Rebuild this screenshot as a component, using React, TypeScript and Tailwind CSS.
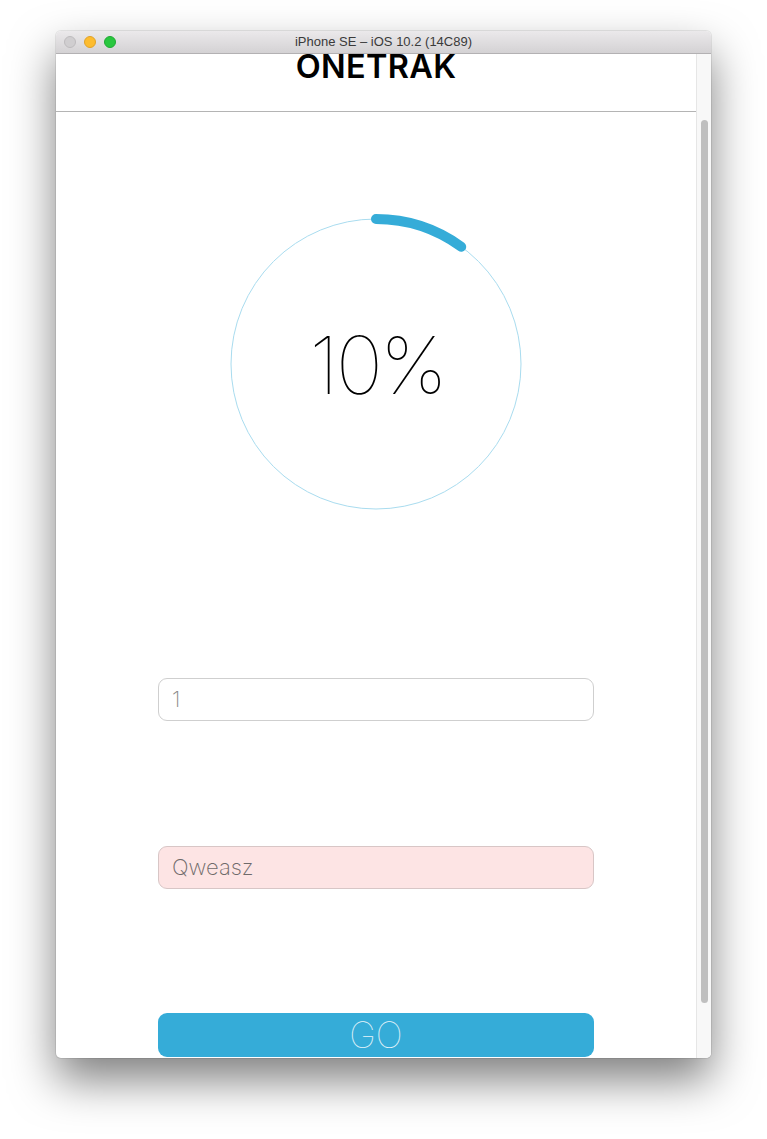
import React from "react";

function Ring() {
  const r = 145;
  const c = 150;
  const ang = (36 * Math.PI) / 180;
  const ex = c + r * Math.sin(ang);
  const ey = c - r * Math.cos(ang);
  return (
    <div className="relative w-[300px] h-[300px]">
      <svg width="300" height="300" viewBox="0 0 300 300" className="absolute inset-0">
        <circle cx={c} cy={c} r={r} fill="none" stroke="#a9dcef" strokeWidth="1" />
        <path
          d={`M ${c} ${c - r} A ${r} ${r} 0 0 1 ${ex} ${ey}`}
          fill="none"
          stroke="#35acd8"
          strokeWidth="10"
          strokeLinecap="round"
        />
      </svg>
      <div className="absolute inset-0 flex items-center justify-center">
        <span className="text-[80px] leading-none font-thin text-black tracking-[-3px] font-['Inter',sans-serif] pl-[2px] pt-[2px]">
          10%
        </span>
      </div>
    </div>
  );
}

export default function App() {
  return (
    <div className="w-[767px] h-[1139px] bg-white pt-[31px] pl-[56px] font-['Inter',sans-serif]">
      <div className="w-[655px] h-[1027px] rounded-[5px] overflow-hidden flex flex-col shadow-[0_22px_45px_rgba(0,0,0,0.5),0_0_0_1px_rgba(0,0,0,0.08)] bg-white">
        <div className="h-[23px] shrink-0 bg-gradient-to-b from-[#ebe9eb] to-[#d4d2d4] border-b border-[#b3b1b3] flex items-center relative">
          <div className="flex items-center gap-[8px] pl-[8px]">
            <div className="w-[12px] h-[12px] rounded-full bg-[#d0ced0] border border-[#bdbbbd]" />
            <div className="w-[12px] h-[12px] rounded-full bg-[#fdbc2f] border border-[#e0a228]" />
            <div className="w-[12px] h-[12px] rounded-full bg-[#29c73f] border border-[#20a933]" />
          </div>
          <div className="absolute inset-0 flex items-center justify-center text-[13px] leading-[16px] text-[#3a3a3a] font-['Liberation_Sans','Noto_Sans',sans-serif]">
            iPhone SE – iOS 10.2 (14C89)
          </div>
        </div>
        <div className="flex flex-1 min-h-0">
          <div className="w-[640px] flex flex-col items-center">
            <div className="w-full h-[58px] border-b border-[#b4b4b4] flex justify-center items-start">
              <span className="text-[32.5px] leading-[26px] font-semibold text-black tracking-[0.3px] font-['Inter',sans-serif]">
                ONETRAK
              </span>
            </div>
            <div className="mt-[102px]">
              <Ring />
            </div>
            <div className="mt-[164px] w-[436px] h-[43px] rounded-[9px] border border-[#cfcfcf] bg-white flex items-center pl-[13px]">
              <span className="text-[22px] font-extralight text-[#8a8a8a]">1</span>
            </div>
            <div className="mt-[125px] w-[436px] h-[43px] rounded-[9px] border border-[#d8c6c6] bg-[#fde4e4] flex items-center pl-[13px]">
              <span className="text-[22px] font-extralight text-[#6f6a6a]">Qweasz</span>
            </div>
            <div className="mt-[124px] w-[436px] h-[44px] rounded-[9px] bg-[#35acd8] flex items-center justify-center">
              <span className="text-[36px] leading-none font-thin text-[#e6f4fa]">GO</span>
            </div>
          </div>
          <div className="w-[15px] bg-[#f8f8f8] border-l border-[#e6e6e6] flex justify-center pt-[66px] pb-[55px]">
            <div className="w-[7px] h-full rounded-full bg-[#bfbfbf]" />
          </div>
        </div>
      </div>
    </div>
  );
}
